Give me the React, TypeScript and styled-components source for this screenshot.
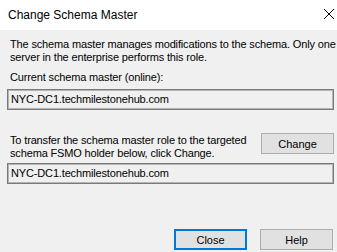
import styled, { createGlobalStyle } from 'styled-components';

const GlobalStyle = createGlobalStyle`
  html, body {
    margin: 0;
    padding: 0;
    background: #f0f0f0;
  }
`;

const Dialog = styled.div`
  width: 337px;
  height: 252px;
  display: flex;
  flex-direction: column;
  background: #f0f0f0;
  font-family: 'Liberation Sans', Arial, sans-serif;
  font-size: 11px;
  line-height: 13px;
  letter-spacing: -0.15px;
  color: #000;
  overflow: hidden;
`;

const TitleBar = styled.div`
  height: 30px;
  flex-shrink: 0;
  background: #fff;
  display: flex;
  align-items: center;
  justify-content: space-between;
  padding: 0 3px 0 8px;
  font-size: 12px;
  letter-spacing: 0;
`;

const CloseIcon = styled.svg`
  width: 10px;
  height: 10px;
  margin-bottom: 2px;
`;

const Body = styled.div`
  flex: 1;
  display: flex;
  flex-direction: column;
  padding: 8px 3px 2px 7px;
`;

const Text = styled.p<{ $top?: number }>`
  margin: ${props => props.$top ?? 0}px 0 0 3px;
  white-space: nowrap;
`;

const Field = styled.div<{ $top: number }>`
  margin-top: ${props => props.$top}px;
  height: 21px;
  box-sizing: border-box;
  border: 1px solid #7a7a7a;
  box-shadow: inset 0 0 0 1px #b4b4b4;
  padding: 3px 0 0 3px;
  line-height: 13px;
`;

const TransferRow = styled.div`
  margin-top: 23px;
  display: flex;
  justify-content: space-between;
  align-items: flex-start;
`;

const Button = styled.button<{ $default?: boolean }>`
  width: 73px;
  height: 21px;
  box-sizing: border-box;
  background: #e1e1e1;
  border: ${props => (props.$default ? '2px solid #0078d7' : '1px solid #adadad')};
  font-family: inherit;
  font-size: 11px;
  color: #000;
  padding: 0;
`;

const Footer = styled.div`
  margin-top: auto;
  display: flex;
  justify-content: flex-end;
  gap: 13px;
  padding-right: 1px;
`;

export default function App() {
  return (
    <>
      <GlobalStyle />
      <Dialog>
        <TitleBar>
          <span>Change Schema Master</span>
          <CloseIcon viewBox='0 0 10 10'>
            <path d='M0 0 L10 10 M10 0 L0 10' stroke='#000' strokeWidth='1' />
          </CloseIcon>
        </TitleBar>
        <Body>
          <Text>
            The schema master manages modifications to the schema. Only one
            <br />
            server in the enterprise performs this role.
          </Text>
          <Text $top={7}>Current schema master (online):</Text>
          <Field $top={5}>NYC-DC1.techmilestonehub.com</Field>
          <TransferRow>
            <Text $top={1}>
              To transfer the schema master role to the targeted
              <br />
              schema FSMO holder below, click Change.
            </Text>
            <Button>Change</Button>
          </TransferRow>
          <Field $top={3}>NYC-DC1.techmilestonehub.com</Field>
          <Footer>
            <Button $default>Close</Button>
            <Button>Help</Button>
          </Footer>
        </Body>
      </Dialog>
    </>
  );
}
